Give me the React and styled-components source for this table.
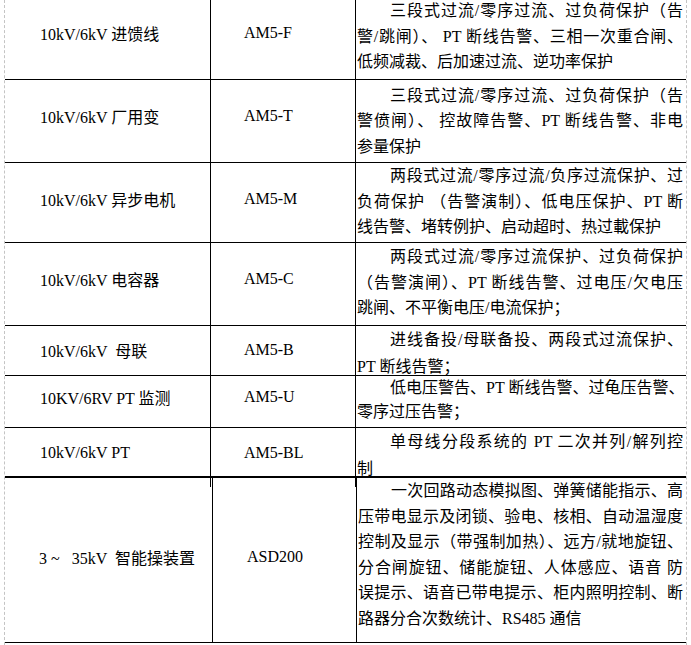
import styled, { createGlobalStyle } from "styled-components";

const GlobalStyle = createGlobalStyle`
  html, body { margin: 0; padding: 0; background: #fff; }
  body {
    font-family: "Liberation Serif", "Noto Sans CJK SC", serif;
    color: #000;
    overflow: hidden;
  }
`;

const Sheet = styled.div`
  margin-left: 4px;
  width: 683px;
  height: 645px;
  box-sizing: border-box;
  border-left: 1px dashed #c4c4c4;
  border-right: 1px dashed #c4c4c4;
  overflow: hidden;
`;

const Table = styled.div`
  margin-top: -3px;
`;

const Row = styled.div`
  display: grid;
  grid-template-columns: ${p => (p.$wide ? "208px 144px 1fr" : "206px 145px 1fr")};
  height: ${p => p.$h}px;
  box-sizing: border-box;
  border-bottom: ${p => (p.$thick ? 2 : 1)}px solid #000;
`;

const Cell = styled.div`
  display: flex;
  align-items: center;
  box-sizing: border-box;
  padding-bottom: ${p => (p.$wide ? 7 : 10)}px;
  font-size: 16px;
  white-space: pre;
  border-right: 1px solid #000;
`;

const NameCell = styled(Cell)`
  padding-left: ${p => (p.$wide ? 34 : 35)}px;
`;

const ModelCell = styled(Cell)`
  padding-left: ${p => (p.$wide ? 34 : 33)}px;
`;

const DescCell = styled.div`
  display: flex;
  flex-direction: column;
  justify-content: center;
  box-sizing: border-box;
  padding: 0 3px ${p => p.$pb}px 1px;
  font-size: 16px;
`;

const Line = styled.div`
  line-height: ${p => p.$lh}px;
  white-space: nowrap;
  text-align: justify;
  text-align-last: ${p => (p.$last ? "left" : "justify")};
  text-indent: ${p => (p.$first ? 33 : 0)}px;
`;

const rows = [
  {
    name: "10kV/6kV 进馈线",
    model: "AM5-F",
    h: 83,
    lines: [
      "三段式过流/零序过流、过负荷保护（告",
      "警/跳闸）、 PT 断线告警、三相一次重合闸、",
      "低频减裁、后加速过流、逆功率保护",
    ],
  },
  {
    name: "10kV/6kV 厂用变",
    model: "AM5-T",
    h: 83,
    pb: 0,
    lines: [
      "三段式过流/零序过流、过负荷保护（告",
      "警偾闸）、 控故障告警、PT 断线告警、非电",
      "参量保护",
    ],
  },
  {
    name: "10kV/6kV 异步电机",
    model: "AM5-M",
    h: 80,
    pb: 6,
    lines: [
      "两段式过流/零序过流/负序过流保护、过",
      "负荷保护 （告警演制）、低电压保护、PT 断",
      "线告警、堵转例护、启动超时、热过載保护",
    ],
  },
  {
    name: "10kV/6kV 电容器",
    model: "AM5-C",
    h: 83,
    lines: [
      "两段式过流/零序过流保护、过负荷保护",
      "（告警演闸）、PT 断线告警、过电压/欠电压",
      "跳闸、不平衡电压/电流保护；",
    ],
  },
  {
    name: "10kV/6kV  母联",
    model: "AM5-B",
    h: 50,
    lh: 27,
    pb: 4,
    lines: ["进线备投/母联备投、两段式过流保护、", "PT 断线告警；"],
  },
  {
    name: "10KV/6RV PT 监测",
    model: "AM5-U",
    h: 52,
    lh: 24,
    lines: ["低电压警告、PT 断线告警、过龟压告警、", "零序过压告警；"],
  },
  {
    name: "10kV/6kV PT",
    model: "AM5-BL",
    h: 50,
    lh: 27,
    pb: 5,
    thick: true,
    lines: ["单母线分段系统的 PT 二次并列/解列控", "制"],
  },
  {
    name: "3 ~   35kV  智能操装置",
    model: "ASD200",
    h: 165,
    wide: true,
    pb: 11,
    lines: [
      "一次回路动态模拟图、弹簧储能指示、高",
      "压带电显示及闭锁、验电、核相、自动温湿度",
      "控制及显示（带强制加热）、远方/就地旋钮、",
      "分合闸旋钮、储能旋钮、人体感应、语音 防",
      "误提示、语音已带电提示、柜内照明控制、断",
      "路器分合次数统计、RS485 通信",
    ],
  },
];

export default function App() {
  return (
    <>
      <GlobalStyle />
      <Sheet>
        <Table>
          {rows.map((r, i) => (
            <Row key={i} $h={r.h} $thick={r.thick} $wide={r.wide}>
              <NameCell $wide={r.wide}>{r.name}</NameCell>
              <ModelCell $wide={r.wide}>{r.model}</ModelCell>
              <DescCell $pb={r.pb ?? 3}>
                {r.lines.map((t, j) => (
                  <Line
                    key={j}
                    $lh={r.lh || 25.5}
                    $first={j === 0}
                    $last={j === r.lines.length - 1}
                  >
                    {t}
                  </Line>
                ))}
              </DescCell>
            </Row>
          ))}
        </Table>
      </Sheet>
    </>
  );
}
